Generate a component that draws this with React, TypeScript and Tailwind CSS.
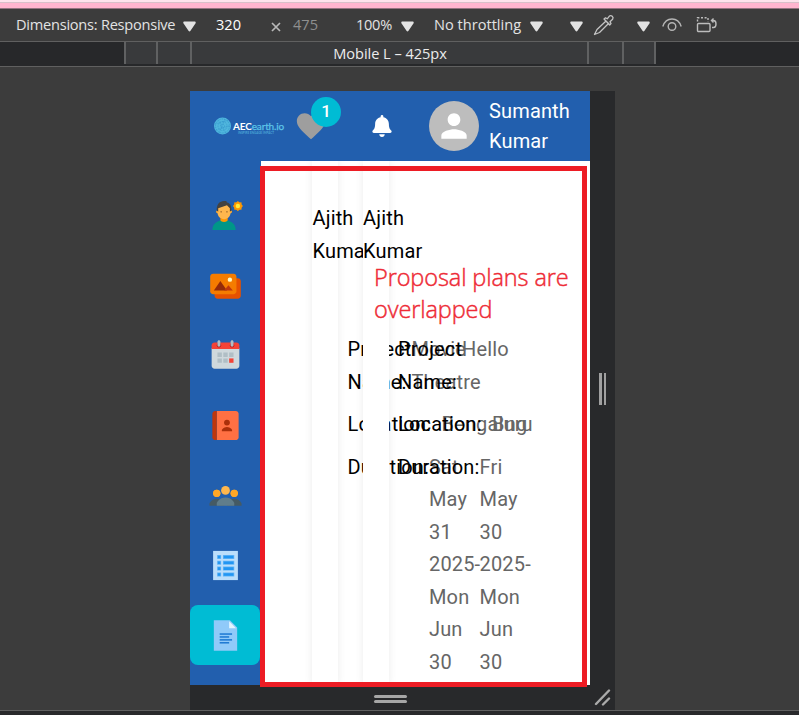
import React from "react";
import { FcPortraitMode, FcGallery, FcContacts, FcConferenceCall, FcDocument } from "react-icons/fc";
import { MdFavorite, MdPerson } from "react-icons/md";
import { FaBell } from "react-icons/fa";

type Plan = { project: string[]; location: string; duration: string[] };

const plans: Plan[] = [
  { project: ["Movie", "Theatre"], location: "Bengaluru", duration: ["Sat", "May", "31", "2025-", "Mon", "Jun", "30"] },
  { project: ["Hello"], location: "Bng", duration: ["Fri", "May", "30", "2025-", "Mon", "Jun", "30"] },
];

const Caret = ({ className = "" }: { className?: string }) => (
  <svg className={`shrink-0 ${className}`} width="13" height="11" viewBox="0 0 13 11">
    <path d="M1.5 .5h10c1.2 0 1.6 1.2.9 2.1L7.5 9.8c-.6.8-1.4.8-2 0L.6 2.6C-.1 1.7.3.5 1.5.5Z" fill="#e3e3e3" />
  </svg>
);

function Toolbar() {
  return (
    <div className="flex h-8 shrink-0 items-center bg-[#3c3c3c] text-[14.6px] text-[#e3e3e3]">
      <span className="ml-4 w-[160px] tracking-[-0.25px] whitespace-nowrap">Dimensions: Responsive</span>
      <Caret className="mt-0.5 ml-[7px]" />
      <span className="ml-5 w-[55px] text-white">320</span>
      <svg className="mt-1 shrink-0" width="10" height="10" viewBox="0 0 10 10" stroke="#b8b8b8" strokeWidth="1.7"><path d="m1 1 8 8M9 1 1 9" /></svg>
      <span className="ml-[12px] w-[63px] text-[#8f8f8f]">475</span>
      <span className="w-[45px] tracking-[-0.3px]">100%</span>
      <Caret className="mt-0.5" />
      <span className="ml-5 w-[96px] whitespace-nowrap">No throttling</span>
      <Caret className="mt-0.5" />
      <Caret className="mt-0.5 ml-[27px]" />
      <svg className="ml-[10px] shrink-0" width="22" height="22" viewBox="0 0 22 22" fill="none" stroke="#c4c4c4" strokeWidth="1.3" strokeLinejoin="round">
        <path d="m12 6 4.5 4.5M13 7 4 15.5 1.5 20.5l5-2L15.5 9.5M11 5l1.5-1.2 1.7 1 2.2-2.7c1.8-1.4 4.7.8 3.2 3.2L17 7.8l1 1.8-1.3 1.5Z" />
      </svg>
      <Caret className="mt-0.5 ml-[22px]" />
      <svg className="ml-[12px] shrink-0" width="20" height="16" viewBox="0 0 20 16" fill="none" stroke="#b5b5b5" strokeWidth="1.4">
        <path d="M.8 9.5C2.5 4.2 6 2 10 2s7.5 2.2 9.2 7.5" /><circle cx="10" cy="9.5" r="3.8" />
      </svg>
      <svg className="ml-[14px] shrink-0" width="22" height="18" viewBox="0 0 22 18" fill="none" stroke="#bcbcbc" strokeWidth="1.4">
        <rect x="1.5" y="7.500" width="12.5" height="8" rx="1" /><path d="M1.5 5.5V1.8h10.5v4" strokeDasharray="2 1.6" /><path d="M17.5 2.5 15.5 4.5l2 2M15.5 4.5H17.500a2.500 3.5 0 0 1 0 7h-1.500" />
      </svg>
    </div>
  );
}

function Ruler() {
  return (
    <div className="flex h-[26px] shrink-0 border-y border-[#606060] bg-[#27282a] pl-[124px]">
      <div className="flex h-[22px] w-[532px] border-x-2 border-[#606162] bg-[#393a3c]">
        <div className="w-[32px] border-r-2 border-[#606162]" />
        <div className="w-[34px] border-r-2 border-[#606162]" />
        <div className="flex-1 pl-px text-center text-[14.6px] leading-[22px] tracking-[-0.05px] text-[#ececec]">Mobile L – 425px</div>
        <div className="w-[35px] border-l-2 border-[#606162]" />
        <div className="w-[32px] border-l-2 border-[#606162]" />
      </div>
    </div>
  );
}

function Logo() {
  return (
    <div className="ml-6 flex w-[70px] items-center">
      <svg className="shrink-0" width="17" height="18" viewBox="0 0 17 18">
        <circle cx="8.5" cy="9" r="8.5" fill="#4fb6dd" />
        <g fill="none" stroke="#2f8fc8" strokeWidth=".6" strokeDasharray="1 .8">
          <circle cx="8.5" cy="9" r="7" /><circle cx="8.5" cy="9" r="4.5" /><circle cx="8.5" cy="9" r="2" />
          <path d="M1 7l14-4M2 13l13-4M4 3l8 13M11 2L5 16" />
        </g>
      </svg>
      <div className="ml-[2px] flex flex-col pt-1 font-['Lato',sans-serif]">
        <span className="text-[10px] leading-[10px] tracking-[-0.15px] whitespace-nowrap text-[#5dc4e8]"><b className="text-white">AEC</b><span className="[-webkit-text-stroke:0.25px_#5dc4e8]">earth.io</span></span>
        <span className="ml-[5px] text-[3px] leading-[4px] font-bold whitespace-nowrap text-[#4aa5d6]">INSPIRE ENGAGE IMPACT</span>
      </div>
    </div>
  );
}

function Header() {
  return (
    <header className="flex h-[70px] shrink-0 items-center bg-[#225fae]">
      <Logo />
      <div className="relative ml-[10px] flex size-[34px] items-center">
        <MdFavorite className="size-[34px] text-[#9e9e9e]" />
        <span className="absolute -top-[12px] left-[17px] flex size-[30px] items-center justify-center rounded-full bg-[#00bcd4] text-[17px] font-medium text-white">1</span>
      </div>
      <FaBell className="ml-[43px] size-[22px] text-white" />
      <div className="ml-[36px] flex size-[50px] items-center justify-center rounded-full bg-[#bdbdbd]">
        <MdPerson className="size-[38px] text-white" />
      </div>
      <div className="ml-[10px] w-[90px] text-[20px] leading-[30px] tracking-[0.15px] text-white">Sumanth Kumar</div>
    </header>
  );
}

const CalendarIcon = ({ size }: { size: number }) => (
  <svg width={size} height={size} viewBox="0 0 48 48">
    <path fill="#CFD8DC" d="M5 38V14h38v24c0 2.200-1.800 4-4 4H9c-2.200 0-4-1.800-4-4z" />
    <path fill="#F44336" d="M43 10v5H5v-5c0-2.200 1.800-4 4-4h30c2.200 0 4 1.800 4 4z" />
    <g fill="#B71C1C"><circle cx="33" cy="10" r="3" /><circle cx="15" cy="10" r="3" /></g>
    <path fill="#B0BEC5" d="M33 3c-1.100 0-2 .9-2 2v5c0 1.100.9 2 2 2s2-.9 2-2V5c0-1.100-.9-2-2-2zM15 3c-1.100 0-2 .9-2 2v5c0 1.100.9 2 2 2s2-.9 2-2V5c0-1.100-.9-2-2-2z" />
    <path fill="#B0BEC5" d="M13 20h6v6h-6zM21 20h6v6h-6zM29 20h6v6h-6zM13 28h6v6h-6zM21 28h6v6h-6z" />
    <path fill="#F44336" d="M29 28h6v6h-6z" />
  </svg>
);

const ListIcon = ({ size }: { size: number }) => (
  <svg width={size} height={size} viewBox="0 0 48 48">
    <path fill="#BBDEFB" d="M7 4h34v40H7z" />
    {[9.5, 17.5, 25.5, 33.5].map((y) => (
      <g key={y}>
        <path fill="#64B5F6" d={`M12.5 ${y}h5.5v5.5h-5.5zM20.5 ${y}h15.5v5.5h-15.5z`} />
        <path fill="#2196F3" d={`M13.5 ${y + 1}h3.5v3.5h-3.5zM21.5 ${y + 1}h13.5v3.5h-13.5z`} />
      </g>
    ))}
  </svg>
);

function Sidebar() {
  const icons = [FcPortraitMode, FcGallery, CalendarIcon, FcContacts, FcConferenceCall, ListIcon, FcDocument];
  return (
    <nav className="flex w-[71px] shrink-0 flex-col gap-[10px] bg-[#225fae] pt-6 pr-px">
      {icons.map((Icon, i) => (
        <div key={i} className={`flex h-[60px] items-center justify-center rounded-lg ${i === 6 ? "bg-[#00bcd4]" : ""}`}>
          <Icon size={35} />
        </div>
      ))}
    </nav>
  );
}

function PlanCard({ plan }: { plan: Plan }) {
  return (
    <article className="relative h-full w-[26px] shrink-0 bg-white pt-[41px] text-[20px] leading-[32.5px] tracking-[0.15px] text-black shadow-[0_0_8px_rgba(0,0,0,0.08)]">
      <div className="ml-[0.5px] flex h-[131px] w-[62px] flex-col"><span>Ajith</span><span>Kumar</span></div>
      <div className="ml-[35.5px] flex w-[170px] flex-col gap-[10px]">
        <div className="flex">
          <span className="w-16 shrink-0">Project Name:</span>
          <span className="flex flex-col text-[#666]">{plan.project.map((t) => <span key={t}>{t}</span>)}</span>
        </div>
        <div className="flex">
          <span className="w-[94px] shrink-0">Location:</span>
          <span className="text-[#666]">{plan.location}</span>
        </div>
        <div className="flex">
          <span className="w-[81.5px] shrink-0">Duration:</span>
          <span className="flex flex-col text-[#666]">{plan.duration.map((t, i) => <span key={i}>{t}</span>)}</span>
        </div>
      </div>
    </article>
  );
}

export default function App() {
  return (
    <div className="flex h-[715px] w-[799px] flex-col overflow-hidden bg-[#3c3c3c] font-['Open_Sans',sans-serif]">
      <div className="h-[9px] shrink-0 border-t-2 border-b border-t-[#fde3ec] border-b-[#93747f] bg-[#ffb5cf]">
        <div className="h-px bg-[#d8c0c9]" />
      </div>
      <Toolbar />
      <Ruler />
      <main className="flex h-[643px] shrink-0 pt-6 pl-[190px]">
        <div className="relative flex w-[425px] flex-col bg-[#28292b]">
          <div className="flex h-[594px] font-['Roboto',sans-serif]">
            <div className="flex w-[400px] flex-col">
              <Header />
              <div className="flex h-[524px]">
                <Sidebar />
                <section className="flex flex-1 gap-[24.6px] overflow-hidden bg-white pl-[51px]">
                  {plans.map((plan, i) => <PlanCard key={i} plan={plan} />)}
                </section>
              </div>
            </div>
            <div className="flex flex-1 items-center justify-center gap-[2px] pt-0.5">
              <i className="h-8 w-[3px] bg-[#a0a0a0]" /><i className="h-8 w-[2px] bg-[#a0a0a0]" />
            </div>
          </div>
          <div className="flex flex-1 items-center">
            <div className="ml-[184px] mt-0.5 flex w-[33px] flex-col gap-[2px]">
              <i className="h-[3px] rounded bg-[#a6a6a6]" /><i className="h-[3px] rounded bg-[#a6a6a6]" />
            </div>
            <svg className="mr-[4px] ml-auto" width="17" height="17" viewBox="0 0 17 17" stroke="#aaa" strokeWidth="2.4" strokeLinecap="round"><path d="M2 15 15 1.5M9 15.5 15 9.5" /></svg>
          </div>
          <div className="absolute top-[75px] left-[70px] h-[521px] w-[327px] border-[5px] border-[#ed1c24]" />
          <p className="absolute top-[170px] left-[184px] w-[220px] font-['Open_Sans',sans-serif] text-[23.5px] leading-[32px] font-light tracking-[-0.1px] text-[#ee2b36] [-webkit-text-stroke:0.45px_#ee2b36]">Proposal plans are<br />overlapped</p>
        </div>
      </main>
      <div className="h-[5px] shrink-0 border-t border-[#606060] bg-[#28292b]" />
    </div>
  );
}
